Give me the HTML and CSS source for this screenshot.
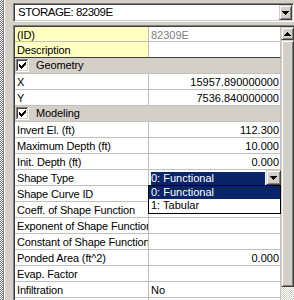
FILE: index.html
```html
<!DOCTYPE html>
<html>
<head>
<meta charset="utf-8">
<link rel="stylesheet" href="styles.css">
</head>
<body>
<div class="app">
  <div class="strip"><div class="dither"></div><div class="edge"></div></div>
  <div class="main">
    <div class="combo">
      <div class="combo-text">STORAGE: 82309E</div>
      <div class="btn combo-btn"><svg width="7" height="4" viewBox="0 0 7 4" shape-rendering="crispEdges"><path d="M0 0h7v1h-1v1h-1v1h-1v1h-1v-1h-1v-1h-1v-1h-1z" fill="#000"/></svg></div>
    </div>
    <div class="gridwrap">
      <div class="gridinner">
        <div class="grid">
          <div class="row first ro"><div class="name">(ID)</div><div class="val ro-val">82309E</div></div>
          <div class="row ro fixed-end"><div class="name">Description</div><div class="val"></div></div>
          <div class="row group">
            <svg class="cb" width="13" height="13" viewBox="0 0 13 13" shape-rendering="crispEdges"><rect width="13" height="13" fill="#fff"/><path d="M0 0h12v1H1v11H0z" fill="#808080"/><path d="M1 1h10v1H2v9H1z" fill="#404040"/><path d="M1 11h11v1H1zM11 1h1v10h-1z" fill="#d4d0c8"/><path d="M9 3h1v1h-1zM8 4h2v1h-2zM3 5h1v1H3zM7 5h3v1H7zM3 6h2v1H3zM6 6h3v1H6zM3 7h5v1H3zM4 8h3v1H4zM5 9h1v1H5z" fill="#000"/></svg>
            <span class="group-label">Geometry</span>
          </div>
          <div class="row"><div class="name">X</div><div class="val num">15957.890000000</div></div>
          <div class="row"><div class="name">Y</div><div class="val num">7536.840000000</div></div>
          <div class="row group">
            <svg class="cb" width="13" height="13" viewBox="0 0 13 13" shape-rendering="crispEdges"><rect width="13" height="13" fill="#fff"/><path d="M0 0h12v1H1v11H0z" fill="#808080"/><path d="M1 1h10v1H2v9H1z" fill="#404040"/><path d="M1 11h11v1H1zM11 1h1v10h-1z" fill="#d4d0c8"/><path d="M9 3h1v1h-1zM8 4h2v1h-2zM3 5h1v1H3zM7 5h3v1H7zM3 6h2v1H3zM6 6h3v1H6zM3 7h5v1H3zM4 8h3v1H4zM5 9h1v1H5z" fill="#000"/></svg>
            <span class="group-label">Modeling</span>
          </div>
          <div class="row"><div class="name">Invert El. (ft)</div><div class="val num">112.300</div></div>
          <div class="row"><div class="name">Maximum Depth (ft)</div><div class="val num">10.000</div></div>
          <div class="row"><div class="name">Init. Depth (ft)</div><div class="val num">0.000</div></div>
          <div class="row"><div class="name">Shape Type</div>
            <div class="val editor-cell">
              <div class="editor">
                <div class="sel">0: Functional</div>
                <div class="btn edit-btn"><svg width="7" height="4" viewBox="0 0 7 4" shape-rendering="crispEdges"><path d="M0 0h7v1h-1v1h-1v1h-1v1h-1v-1h-1v-1h-1v-1h-1z" fill="#000"/></svg></div>
              </div>
            </div>
          </div>
          <div class="row"><div class="name">Shape Curve ID</div><div class="val"></div></div>
          <div class="row"><div class="name">Coeff. of Shape Function</div><div class="val num">100.000</div></div>
          <div class="row"><div class="name">Exponent of Shape Function</div><div class="val"></div></div>
          <div class="row"><div class="name">Constant of Shape Function</div><div class="val"></div></div>
          <div class="row"><div class="name">Ponded Area (ft^2)</div><div class="val num">0.000</div></div>
          <div class="row"><div class="name">Evap. Factor</div><div class="val"></div></div>
          <div class="row"><div class="name">Infiltration</div><div class="val">No</div></div>
          <div class="row"><div class="name"></div><div class="val"></div></div>

          <div class="dropdown">
            <div class="item active">0: Functional</div>
            <div class="item">1: Tabular</div>
          </div>
        </div>
        <div class="scrollbar">
          <div class="btn sb-up"><svg width="7" height="4" viewBox="0 0 7 4" shape-rendering="crispEdges"><path d="M3 0h1v1h1v1h1v1h1v1H0v-1h1v-1h1v-1h1z" fill="#000"/></svg></div>
          <div class="btn thumb"></div>
          <div class="track"></div>
        </div>
      </div>
    </div>
  </div>
</div>
</body>
</html>
```
FILE: styles.css
```css
* { box-sizing: border-box; margin: 0; padding: 0; }
html, body { width: 294px; height: 300px; overflow: hidden; }
body {
  background: #d4d0c8;
  font-family: "Liberation Sans", Arial, sans-serif;
  font-size: 11px;
  color: #000;
}
.app { display: flex; height: 300px; }
.strip { width: 13px; flex: none; display: flex; }
.dither {
  width: 3px;
  background: repeating-conic-gradient(#808080 0 25%, #ffffff 0 50%) 0 0 / 2px 2px;
}
.edge {
  flex: 1;
  background: linear-gradient(to right, #808080 0 1px, #ffffff 1px 2px, #d4d0c8 2px);
}
.main { flex: 1; min-width: 0; display: flex; flex-direction: column; }

.combo {
  margin-top: 3px;
  height: 19px;
  flex: none;
  display: flex;
  background: #fff;
  border: 1px solid;
  border-color: #808080 #ffffff #ffffff #808080;
  box-shadow: inset 1px 1px #404040, inset -1px -1px #d4d0c8;
  padding: 1px;
}
.combo-text {
  flex: 1;
  padding-left: 3px;
  font-size: 11.5px;
  letter-spacing: -0.5px;
  line-height: 15px;
  white-space: nowrap;
  overflow: hidden;
}
.btn {
  background: #d4d0c8;
  border: 1px solid;
  border-color: #d4d0c8 #404040 #404040 #d4d0c8;
  box-shadow: inset 1px 1px #ffffff, inset -1px -1px #808080;
  display: flex;
  align-items: center;
  justify-content: center;
  flex: none;
}
.btn svg { display: block; }
.combo-btn { width: 13px; height: 15px; }

.gridwrap {
  flex: 1;
  min-height: 0;
  margin-top: 3px;
  border-top: 1px solid #808080;
  border-left: 1px solid #808080;
}
.gridinner {
  height: 100%;
  display: flex;
  background: #fff;
  border-top: 1px solid #404040;
  border-left: 1px solid #404040;
}
.grid { width: 266px; flex: none; position: relative; }

.row {
  display: flex;
  height: 16px;
  border-bottom: 1px solid #c0c0c0;
  border-right: 1px solid #c0c0c0;
}
.row.first { height: 15px; }
.row.fixed-end { border-bottom-color: #404040; }
.name {
  width: 134px;
  flex: none;
  border-right: 1px solid #c0c0c0;
  padding-left: 2px;
  line-height: 17px;
  letter-spacing: -0.15px;
  white-space: nowrap;
  overflow: hidden;
}
.val {
  flex: 1;
  min-width: 0;
  padding: 0 1px 0 2px;
  line-height: 17px;
  white-space: nowrap;
  overflow: hidden;
}
.num { text-align: right; }
.ro .name { background: #ffffc0; }
.ro-val { color: #808080; }

.group {
  background: #d4d0c8;
  align-items: center;
}
.cb { display: block; margin-left: 1px; flex: none; }
.group-label { margin-left: 7px; line-height: 15px; letter-spacing: -0.1px; }

.editor-cell { padding: 0; overflow: visible; }
.editor {
  display: flex;
  height: 15px;
  margin-right: -1px;
  background: #fff;
  position: relative;
  z-index: 1;
}
.sel {
  flex: 1;
  margin: 2px 1px 0 2px;
  height: 13px;
  background: #0a246a;
  color: #fff;
  line-height: 13px;
  white-space: nowrap;
  overflow: hidden;
}
.edit-btn { width: 15px; height: 15px; }

.dropdown {
  position: absolute;
  left: 133px;
  top: 158px;
  width: 133px;
  height: 29px;
  border: 1px solid #000;
  background: #fff;
  z-index: 2;
}
.item {
  height: 13px;
  line-height: 13px;
  padding-left: 2px;
  white-space: nowrap;
}
.item.active { background: #0a246a; color: #fff; }

.scrollbar {
  width: 13px;
  flex: none;
  display: flex;
  flex-direction: column;
}
.sb-up { height: 13px; }
.thumb { height: 247px; }
.track {
  flex: 1;
  background: repeating-conic-gradient(#d4d0c8 0 25%, #ffffff 0 50%) 0 0 / 2px 2px;
}
```
